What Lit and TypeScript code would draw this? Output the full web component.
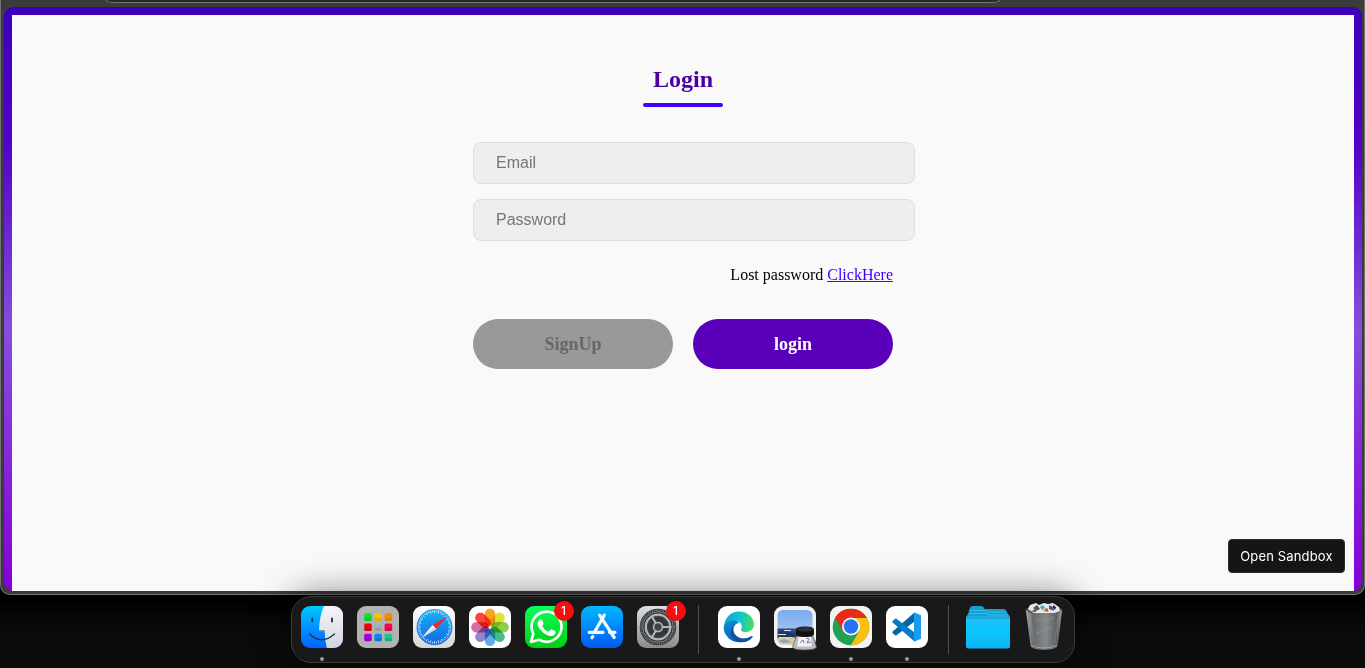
import { LitElement, html, css, svg } from "lit";
import { customElement } from "lit/decorators.js";

const petals = ["#fb9a0c", "#dce01c", "#83c93b", "#30b582", "#4fa5e8", "#8b76c8", "#d0609c", "#fb3020"];
const tiles = ["#0be32a", "#f8c400", "#fb8c00", "#ee0012", "#a3b2b8", "#f8045a", "#a800dc", "#0a84f8", "#0ccf8e"];
const around = (n: number) => Array.from({ length: n }, (_, i) => (i * 360) / n);

const finder = svg`
  <defs><linearGradient id="f" x2="0" y2="1"><stop stop-color="#00c8ff"/><stop offset="1" stop-color="#0062ff"/></linearGradient>
  <linearGradient id="fw" x2="0" y2="1"><stop stop-color="#f6f6f8"/><stop offset="1" stop-color="#d2d6e0"/></linearGradient></defs>
  <rect width="42" height="42" rx="9" fill="url(#f)"/>
  <path d="M23 0H33a9 9 0 0 1 9 9V33a9 9 0 0 1-9 9H26Q24 36 23.800 25.200H18Q18.300 10 23 0Z" fill="url(#fw)"/>
  <g fill="none" stroke="#20313f" stroke-width="1.300" stroke-linecap="round"><path d="M11.300 12.500v3M31 12.500v3" stroke-width="1.900"/><path d="M8.500 28Q20.500 39.500 33.500 28"/></g>
  <path d="M18 24.800h5.600" stroke="#20557f" stroke-width=".8"/>`;

const launchpad = svg`
  <rect width="42" height="42" rx="9" fill="#b2b2b3"/>
  ${tiles.map((c, i) => svg`<rect x=${7.2 + (i % 3) * 10.2} y=${7.3 + Math.floor(i / 3) * 10.2} width="7.600" height="7.600" rx="1.700" fill=${c}/>
  <rect x=${7.2 + (i % 3) * 10.2} y=${11.5 + Math.floor(i / 3) * 10.2} width="7.600" height="3.400" rx="1.500" fill="#000" opacity=".1"/>`)}`;

const safari = svg`
  <defs><linearGradient id="s" x2="0" y2="1"><stop stop-color="#19b2f6"/><stop offset="1" stop-color="#1468e0"/></linearGradient>
  <linearGradient id="sw" x2="0" y2="1"><stop stop-color="#fff"/><stop offset="1" stop-color="#d6d6d6"/></linearGradient></defs>
  <rect width="42" height="42" rx="9" fill="url(#sw)"/><circle cx="21.500" cy="21" r="18" fill="url(#s)"/>
  <g stroke="#e4f5ff" stroke-width=".8">${around(48).map((a, i) => svg`<path d=${i % 2 ? "M21.5 4.300v1.800" : "M21.5 4.300v2.800"} transform="rotate(${a} 21.5 21)"/>`)}</g>
  <path d="M34 10.500 23.400 22.900 19.600 19.100Z" fill="#f1252b"/><path d="M9 31.500 19.600 19.100 23.400 22.900Z" fill="#fff"/><path d="M9 31.500 21.500 21 23.400 22.900Z" fill="#d3d6d9"/>`;

const photos = svg`
  <rect width="42" height="42" rx="9" fill="#fff"/>
  <g>${petals.map((c, i) => svg`<rect class="petal" x="15.800" y="2.500" width="10.400" height="17.500" rx="5.200" fill=${c} transform="rotate(${i * 45} 21 21.300)"/>`)}</g>
  <circle cx="21" cy="21.300" r="1" fill="#fff" opacity=".7"/>`;

const whatsapp = svg`
  <defs><linearGradient id="w" x2="0" y2="1"><stop stop-color="#08ff60"/><stop offset="1" stop-color="#00cf10"/></linearGradient></defs>
  <rect width="42" height="42" rx="9" fill="url(#w)"/>
  <path d="M6 36 8.300 27.800A15 15 0 1 1 14 33.700Z" fill="none" stroke="#fff" stroke-width="2.600" stroke-linejoin="round"/>
  <path d="M14.300 13.800q1.400-1.500 2.600 0l1.600 3.500q.2 1-1.400 2.700 2.300 4.300 6.200 5.700 1.200-.8 2-2 .7-.7 1.500-.2l3.300 1.600q1 .5.600 1.600-1.200 3.700-5.300 3.400-4.500-.7-8.500-4.900-4.100-4-4.300-7.200-.1-2.300 1.700-4.200Z" fill="#fff"/>`;

const store = svg`
  <defs><linearGradient id="a" x2="0" y2="1"><stop stop-color="#00b7ff"/><stop offset="1" stop-color="#005bf0"/></linearGradient></defs>
  <rect width="42" height="42" rx="9" fill="url(#a)"/>
  <g fill="none" stroke="#f2faff" stroke-width="3.200" stroke-linecap="round"><path d="M23.300 9.200 13.500 26M18.600 9.200 33.200 31.500M11.800 30.500 10.900 31.800M8.200 26.300H22M28.500 26.300H34"/></g>`;

const settings = svg`
  <defs><linearGradient id="g" x2="0" y2="1"><stop stop-color="#d8e1e6"/><stop offset="1" stop-color="#8c8b8a"/></linearGradient></defs>
  <rect width="42" height="42" rx="9" fill="url(#g)"/><circle cx="21" cy="21" r="18.300" fill="#303234"/>
  <circle cx="21" cy="21" r="16.900" fill="none" stroke="#7b7e80" stroke-width="1.600" stroke-dasharray="1.100 1.112"/>
  <circle cx="21" cy="21" r="15.300" fill="none" stroke="#85888a" stroke-width="1"/>
  <circle cx="21" cy="21" r="12.300" fill="#45484a" stroke="#b4b7b9" stroke-width="2.200"/>
  <circle cx="21" cy="21" r="8" fill="none" stroke="#333537" stroke-width="4"/>
  <circle cx="21" cy="21" r="4.400" fill="#444" stroke="#b4b7b9" stroke-width="1.500"/>
  <path d="M25.200 21H34.500M18.900 17.400 14.300 9.500M18.900 24.600 14.300 32.500" stroke="#b4b7b9" stroke-width="2"/>`;

const edge = svg`
  <defs><linearGradient id="e" x1="0" y1=".4" x2="1" y2=".5"><stop stop-color="#0ba4df"/><stop offset=".55" stop-color="#15c4cc"/><stop offset="1" stop-color="#44e15a"/></linearGradient>
  <linearGradient id="e2" x1="0" y1="0" x2=".5" y2="1"><stop stop-color="#0b8fde"/><stop offset="1" stop-color="#0e59b5"/></linearGradient></defs>
  <rect width="42" height="42" rx="9" fill="#fff"/>
  <path d="M6 20C7 11 13 5.400 21 5.400c9 0 15 6.500 15 12.800 0 5-4 7.800-8.500 7.800-3.500 0-5.200-1.500-4.300-3 1.600-2.700.2-7-4.200-7.800C13 14 8 16.500 6 20Z" fill="url(#e)"/>
  <path d="M5.700 21C7 14.700 17 12.300 21.200 17c-3.200 0-5.700 3-5.700 6.500 0 7 8.500 11 15.500 8.200C25 38.500 14 37 9.200 30.500 6.700 27.500 5.400 24.700 5.700 21Z" fill="url(#e2)"/>
  <path d="M19 17.200c-5 2.300-5.500 8.500-1.500 12.500 4.300 4.300 11 3.500 16.200.4.700-.4 1.300.3.900 1C31 36 25.500 37 21.500 36 12 33.700 9.500 22 19 17.200Z" fill="#134d9d"/>`;

const preview = svg`
  <defs><linearGradient id="p" x2="0" y2="1"><stop stop-color="#79abed"/><stop offset="1" stop-color="#b9d1f3"/></linearGradient></defs>
  <rect width="42" height="42" rx="9" fill="#f2f2f2"/><rect x="3.500" y="4" width="35" height="34.500" rx="5.500" fill="url(#p)"/>
  <path d="M3.500 22.500H38.500V32H3.500Z" fill="#30477f"/><path d="M4 26q6-2 11 0t9 0v5H4Z" fill="#233761"/><path d="M4 28.500h8M10 24.500h7M5 31.500h13" stroke="#d7e4f5" stroke-width="1"/>
  <path d="M3.500 32q11-2 20 0v6.500H9a5.500 5.500 0 0 1-5.500-5.500Z" fill="#dac9a5"/><path d="m5 35 5-2 8 3-9 1Z" fill="#8aa6a2"/>
  <path d="M22.500 30H39L42.500 41q-1 3-12 3t-12-3Z" fill="#b9bbbd" stroke="#555" stroke-width=".7"/>
  <path d="M24.500 31H37l.8 9.500H23.200Z" fill="#f1f1f2"/><path d="m26 37 3-3 1 3m2-5 3 1-2 4 4-1" fill="none" stroke="#555b8a" stroke-width=".8"/>
  <path d="M22 23.500q0-3 9-3t9 3v4.500q0 3-9 3t-9-3Z" fill="#111"/><ellipse cx="31" cy="23.300" rx="8.500" ry="2.200" fill="#303030"/>`;

const chrome = svg`
  <rect width="42" height="42" rx="9" fill="#f3f3f2"/>
  <circle cx="21" cy="21" r="18.300" fill="#1da354"/>
  <path d="M5.150 11.850 13.100 25.700 21 12H36.850A18.300 18.300 0 0 0 5.150 11.850Z" fill="#e82b1b"/>
  <path d="M21 39.300A18.300 18.300 0 0 0 36.850 12H21L28.900 25.600Z" fill="#fcc012"/>
  <circle cx="21" cy="20.500" r="9" fill="#fff"/><circle cx="21" cy="20.500" r="7.300" fill="#2474f2"/>`;

const code = svg`
  <rect width="42" height="42" rx="9" fill="#fff"/>
  <path d="M28.500 6.500V15.500L10.500 29.200Q9.800 29.700 9.100 29.200L6.600 27Q6 26.300 6.600 25.600Z" fill="#0065a9"/>
  <path d="M28.500 35.500V26.500L10.500 12.800Q9.800 12.300 9.100 12.800L6.600 15Q6 15.700 6.600 16.400Z" fill="#087bc6"/>
  <path d="M28 6.200 35 9.300V32.700L28 35.800Z" fill="#1a9cf1"/>`;

const folder = svg`
  <defs><linearGradient id="d" x2="0" y2="1"><stop stop-color="#27bdf3"/><stop offset=".4" stop-color="#0bc7fd"/><stop offset="1" stop-color="#0bb5f3"/></linearGradient></defs>
  <path d="M0 11Q2 9 3.500 3Q4.500 .2 6.500 0H15.500Q17.500 0 18.500 3H38q2 0 2.300 2.500L42 8q2 1 2 5V20H0Z" fill="#159ed4"/>
  <path d="M4 4.500H19l2 1.500H41M3 7.500H20l2 1.500H42" fill="none" stroke="#41c6f0" stroke-width=".8"/>
  <rect y="10.500" width="44" height="32" rx="2.500" fill="url(#d)"/><path d="M1 12H43" stroke="#1796cb"/>`;

const trash = svg`
  <defs><linearGradient id="t"><stop stop-color="#a8abad"/><stop offset=".2" stop-color="#686b6e"/><stop offset=".55" stop-color="#85888b"/><stop offset=".85" stop-color="#5f6265"/><stop offset="1" stop-color="#a0a3a5"/></linearGradient></defs>
  <ellipse cx="21" cy="3.500" rx="17.500" ry="4" fill="#55585a"/>
  <path d="m5 3 2-4 6-2 3 2 5-2 4 1 5-1 6 4 1 4-7 3H12Z" fill="#e8e8e6"/>
  <path d="m10 2 4-3 3 4-4 2Z" fill="#555"/><path d="m17 1 3-2 2 3-3 2Z" fill="#28b7c9"/><path d="m26-1 4 2 1 4-5-2Z" fill="#4750a3"/><path d="m20 5 3-3 3 4Z" fill="#da7a23"/><path d="m30-1 3 2-1 3-2-2ZM8 5l4-1 1 2Z" fill="#282828"/><path d="m23 2 2 1-1 3Z" fill="#c0392b"/>
  <path d="M2.800 3.500Q6 7 12 7H30Q36 7 39.200 3.500L34.600 39.500Q33.500 43.800 21 43.800T7.500 39.500Z" fill="url(#t)"/>
  <path d="M7 11 11 36M35 11 32 36" stroke="#c3c5c7" opacity=".2"/><path d="M8 39.500Q21 44.500 34 39.500" fill="none" stroke="#a9acaf" stroke-width=".8"/>
  <path d="M12 14q10 2 19-3M13 27q9-1 16-7" fill="none" stroke="#a7aaad" stroke-width="3" opacity=".18"/>`;

type Item = { name: string; art: unknown; badge?: string; open?: boolean };
const groups: Item[][] = [
  [
    { name: "Finder", art: finder, open: true },
    { name: "Launchpad", art: launchpad },
    { name: "Safari", art: safari },
    { name: "Photos", art: photos },
    { name: "WhatsApp", art: whatsapp, badge: "1" },
    { name: "App Store", art: store },
    { name: "System Settings", art: settings, badge: "1" },
  ],
  [
    { name: "Edge", art: edge, open: true },
    { name: "Preview", art: preview },
    { name: "Chrome", art: chrome, open: true },
    { name: "Code", art: code, open: true },
  ],
  [
    { name: "Folder", art: folder },
    { name: "Trash", art: trash },
  ],
];

@customElement("login-form")
class LoginForm extends LitElement {
  static styles = css`
    :host { display: block; width: 420px; font-family: "Liberation Serif", "Times New Roman", serif; font-size: 16px; }
    .head { display: flex; flex-direction: column; align-items: center; padding-top: 50px; }
    .title { margin: 0; font-size: 24px; line-height: 28px; color: #4c00a4; font-weight: 700; }
    .rule { width: 80px; height: 4px; margin-top: 10px; border-radius: 9px; background: #4200ff; }
    .fields { display: flex; flex-direction: column; gap: 15px; margin-top: 35px; }
    .field { box-sizing: border-box; width: 442px; height: 42px; margin: 0; padding: 0 22px; border: 1px solid #dedede; border-radius: 8px; background: #eee; font: 16px "Liberation Sans", Arial, sans-serif; outline: 0; }
    .field::placeholder { color: #757575; opacity: 1; }
    .lost { margin-top: 25px; line-height: 18px; text-align: right; color: #000; }
    .link { color: #4200ff; text-decoration: underline; }
    .actions { display: flex; gap: 20px; margin-top: 35px; }
    .button { width: 200px; height: 50px; padding: 0; border: 0; border-radius: 25px; background: #5a00bb; color: #fff; font: 700 18px "Liberation Serif", "Times New Roman", serif; }
    .muted { background: #999; color: #676767; }
  `;
  render() {
    return html`
      <div class="head"><h1 class="title">Login</h1><div class="rule"></div></div>
      <div class="fields">
        <input class="field" type="email" placeholder="Email" />
        <input class="field" type="password" placeholder="Password" />
      </div>
      <div class="lost">Lost password <a class="link" href="#">ClickHere</a></div>
      <div class="actions"><button class="button muted">SignUp</button><button class="button">login</button></div>
    `;
  }
}

@customElement("app-dock")
class AppDock extends LitElement {
  static styles = css`
    :host { display: flex; box-sizing: border-box; width: 784px; height: 67px; padding: 1px 2px 0; border: 1px solid #3b3b3b; border-radius: 20px; background: #191919; box-shadow: 0 0 36px rgba(0, 0, 0, 0.55); }
    .group { display: flex; }
    .item { position: relative; display: flex; flex-direction: column; align-items: center; width: 56px; padding-top: 8px; }
    .icon { display: block; width: 42px; height: 42px; overflow: visible; }
    .wide { margin-right: 2px; }
    .dot { width: 4px; height: 4px; margin-top: 9px; border-radius: 50%; background: #989898; }
    .badge { position: absolute; top: 3px; right: 0; width: 20px; height: 20px; border-radius: 50%; background: #f50d10; color: #fff; font: 500 12px/20px Inter, sans-serif; text-align: center; }
    .line { width: 1px; height: 49px; margin: 7px 12px 0; background: #505050; }
    .line.late { margin: 7px 11px 0 13px; }
    .petal { mix-blend-mode: multiply; opacity: 0.9; }
  `;
  render() {
    return html`${groups.map((g, n) => html`
      ${n ? html`<div class=${n === 2 ? "line late" : "line"}></div>` : ""}
      <div class="group">${g.map((i) => html`
        <div class="item">
          <svg class=${i.name === "Folder" ? "icon wide" : "icon"} viewBox="0 0 42 42" aria-label=${i.name}>${i.art}</svg>
          ${i.open ? html`<div class="dot"></div>` : ""}
          ${i.badge ? html`<div class="badge">${i.badge}</div>` : ""}
        </div>`)}</div>`)}`;
  }
}

@customElement("app-root")
class AppRoot extends LitElement {
  static styles = css`
    :host { display: flex; flex-direction: column; align-items: center; box-sizing: border-box; width: 100%; height: 668px; overflow: hidden; background: linear-gradient(#000 600px, #0b0b0b 632px); }
    .window { box-sizing: border-box; flex: none; width: 100%; height: 595px; padding: 0 3px 3px; border: 1px solid #727272; border-top: 0; border-radius: 0 0 10px 10px; background: #3a3b3a; display: flex; flex-direction: column; }
    .bar { height: 7px; display: flex; padding-left: 102px; }
    .address { box-sizing: border-box; width: 894px; height: 3px; border: 1px solid #777; border-top: 0; border-radius: 0 0 9px 9px / 0 0 3px 3px; background: #292929; }
    .frame { box-sizing: border-box; flex: 1; display: flex; width: 1358px; padding: 8px 8px 0; border-radius: 9px; background: linear-gradient(#3c00b9, #5400c8 23%, #864edc 55%, #8500d8); }
    .page { flex: 1; display: flex; flex-direction: column; align-items: center; background: #f9f9f9; }
    .foot { display: flex; justify-content: flex-end; align-self: stretch; margin-top: auto; padding: 0 9px 18px; }
    .sandbox { box-sizing: border-box; width: 117px; height: 34px; padding: 0; border: 1px solid #2b2b2b; border-radius: 4px; background: #151515; color: #fff; font: 400 13px Inter, sans-serif; letter-spacing: 0.15px; }
    .dock { flex: none; margin-top: 1px; }
  `;
  render() {
    return html`
      <div class="window">
        <div class="bar"><div class="address"></div></div>
        <div class="frame"><main class="page">
          <login-form></login-form>
          <div class="foot"><button class="sandbox">Open Sandbox</button></div>
        </main></div>
      </div>
      <app-dock class="dock"></app-dock>
    `;
  }
}
